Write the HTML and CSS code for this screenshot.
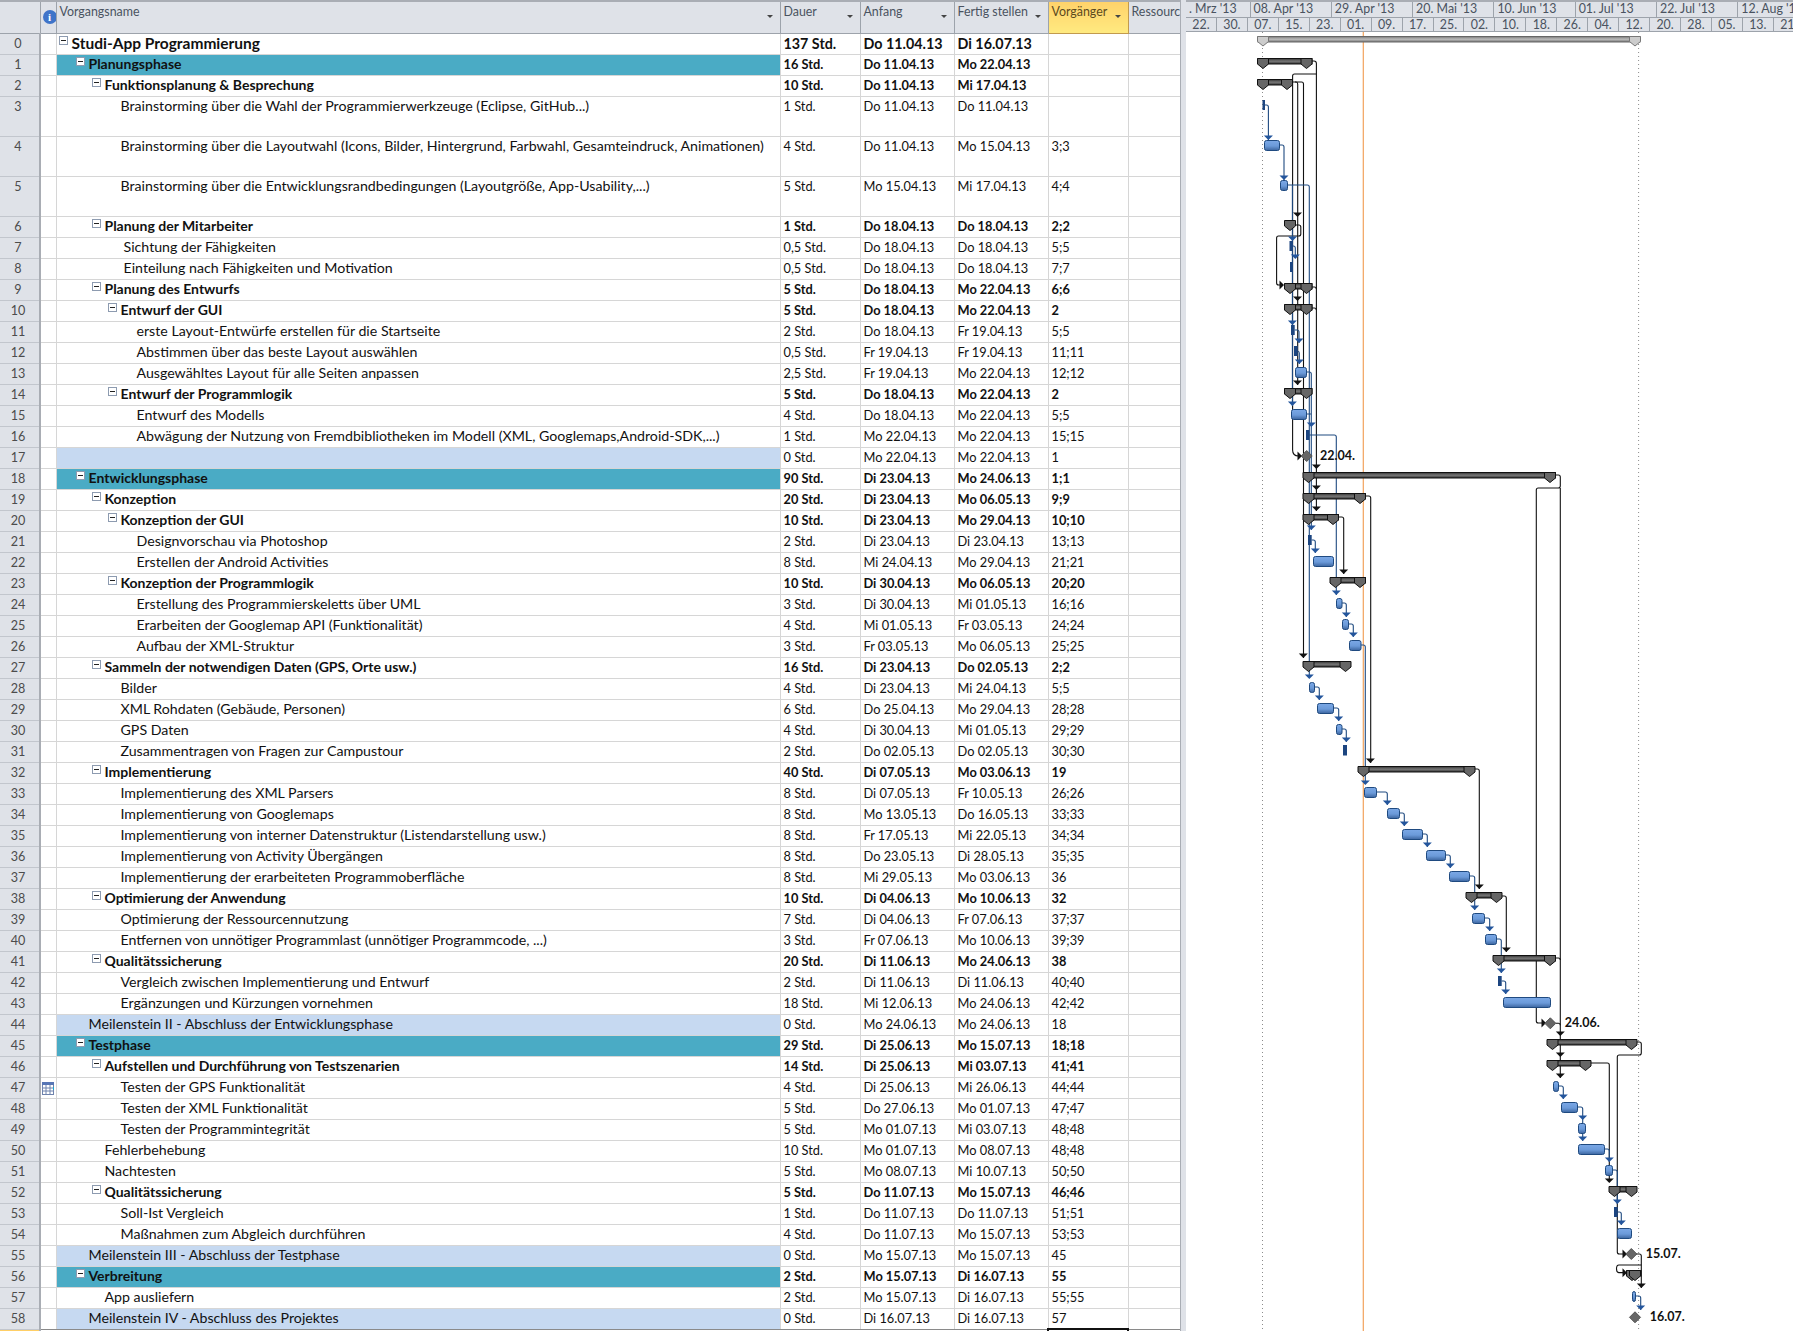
FILE: index.html
```html
<!DOCTYPE html>
<html lang="de">
<head>
  <meta charset="UTF-8">
  <title>Studi-App Programmierung</title>
  <link rel="stylesheet" href="styles.css">
</head>
<body>
<div class="sheet">
<table class="grid">
<colgroup><col class="c-id"><col class="c-info"><col class="c-name"><col class="c-dur"><col class="c-date"><col class="c-date"><col class="c-pred"><col class="c-res"></colgroup>
<thead><tr>
  <th></th>
  <th class="info-head"><span class="info-icon">i</span></th>
  <th>Vorgangsname<i class="drop"></i></th>
  <th>Dauer<i class="drop"></i></th>
  <th>Anfang<i class="drop"></i></th>
  <th>Fertig stellen<i class="drop"></i></th>
  <th class="active">Vorgänger<i class="drop"></i></th>
  <th class="clip">Ressourcenname</th>
</tr></thead>
<tbody>
<tr class="sum root"><td>0</td><td></td><td class="l0"><i class="tog"></i>Studi-App Programmierung</td><td>137 Std.</td><td>Do 11.04.13</td><td>Di 16.07.13</td><td></td><td></td></tr>
<tr class="sum phase"><td>1</td><td></td><td class="l1"><i class="tog"></i>Planungsphase</td><td>16 Std.</td><td>Do 11.04.13</td><td>Mo 22.04.13</td><td></td><td></td></tr>
<tr class="sum"><td>2</td><td></td><td class="l2"><i class="tog"></i>Funktionsplanung &amp; Besprechung</td><td>10 Std.</td><td>Do 11.04.13</td><td>Mi 17.04.13</td><td></td><td></td></tr>
<tr class="tall"><td>3</td><td></td><td class="l3">Brainstorming über die Wahl der Programmierwerkzeuge (Eclipse, GitHub...)</td><td>1 Std.</td><td>Do 11.04.13</td><td>Do 11.04.13</td><td></td><td></td></tr>
<tr class="tall"><td>4</td><td></td><td class="l3">Brainstorming über die Layoutwahl (Icons, Bilder, Hintergrund, Farbwahl, Gesamteindruck, Animationen)</td><td>4 Std.</td><td>Do 11.04.13</td><td>Mo 15.04.13</td><td>3;3</td><td></td></tr>
<tr class="tall"><td>5</td><td></td><td class="l3">Brainstorming über die Entwicklungsrandbedingungen (Layoutgröße, App-Usability,...)</td><td>5 Std.</td><td>Mo 15.04.13</td><td>Mi 17.04.13</td><td>4;4</td><td></td></tr>
<tr class="sum"><td>6</td><td></td><td class="l2"><i class="tog"></i>Planung der Mitarbeiter</td><td>1 Std.</td><td>Do 18.04.13</td><td>Do 18.04.13</td><td>2;2</td><td></td></tr>
<tr><td>7</td><td></td><td class="l3b">Sichtung der Fähigkeiten</td><td>0,5 Std.</td><td>Do 18.04.13</td><td>Do 18.04.13</td><td>5;5</td><td></td></tr>
<tr><td>8</td><td></td><td class="l3b">Einteilung nach Fähigkeiten und Motivation</td><td>0,5 Std.</td><td>Do 18.04.13</td><td>Do 18.04.13</td><td>7;7</td><td></td></tr>
<tr class="sum"><td>9</td><td></td><td class="l2"><i class="tog"></i>Planung des Entwurfs</td><td>5 Std.</td><td>Do 18.04.13</td><td>Mo 22.04.13</td><td>6;6</td><td></td></tr>
<tr class="sum"><td>10</td><td></td><td class="l3"><i class="tog"></i>Entwurf der GUI</td><td>5 Std.</td><td>Do 18.04.13</td><td>Mo 22.04.13</td><td>2</td><td></td></tr>
<tr><td>11</td><td></td><td class="l4">erste Layout-Entwürfe erstellen für die Startseite</td><td>2 Std.</td><td>Do 18.04.13</td><td>Fr 19.04.13</td><td>5;5</td><td></td></tr>
<tr><td>12</td><td></td><td class="l4">Abstimmen über das beste Layout auswählen</td><td>0,5 Std.</td><td>Fr 19.04.13</td><td>Fr 19.04.13</td><td>11;11</td><td></td></tr>
<tr><td>13</td><td></td><td class="l4">Ausgewähltes Layout für alle Seiten anpassen</td><td>2,5 Std.</td><td>Fr 19.04.13</td><td>Mo 22.04.13</td><td>12;12</td><td></td></tr>
<tr class="sum"><td>14</td><td></td><td class="l3"><i class="tog"></i>Entwurf der Programmlogik</td><td>5 Std.</td><td>Do 18.04.13</td><td>Mo 22.04.13</td><td>2</td><td></td></tr>
<tr><td>15</td><td></td><td class="l4">Entwurf des Modells</td><td>4 Std.</td><td>Do 18.04.13</td><td>Mo 22.04.13</td><td>5;5</td><td></td></tr>
<tr><td>16</td><td></td><td class="l4">Abwägung der Nutzung von Fremdbibliotheken im Modell (XML, Googlemaps,Android-SDK,...)</td><td>1 Std.</td><td>Mo 22.04.13</td><td>Mo 22.04.13</td><td>15;15</td><td></td></tr>
<tr class="mile"><td>17</td><td></td><td class="l1"></td><td>0 Std.</td><td>Mo 22.04.13</td><td>Mo 22.04.13</td><td>1</td><td></td></tr>
<tr class="sum phase"><td>18</td><td></td><td class="l1"><i class="tog"></i>Entwicklungsphase</td><td>90 Std.</td><td>Di 23.04.13</td><td>Mo 24.06.13</td><td>1;1</td><td></td></tr>
<tr class="sum"><td>19</td><td></td><td class="l2"><i class="tog"></i>Konzeption</td><td>20 Std.</td><td>Di 23.04.13</td><td>Mo 06.05.13</td><td>9;9</td><td></td></tr>
<tr class="sum"><td>20</td><td></td><td class="l3"><i class="tog"></i>Konzeption der GUI</td><td>10 Std.</td><td>Di 23.04.13</td><td>Mo 29.04.13</td><td>10;10</td><td></td></tr>
<tr><td>21</td><td></td><td class="l4">Designvorschau via Photoshop</td><td>2 Std.</td><td>Di 23.04.13</td><td>Di 23.04.13</td><td>13;13</td><td></td></tr>
<tr><td>22</td><td></td><td class="l4">Erstellen der Android Activities</td><td>8 Std.</td><td>Mi 24.04.13</td><td>Mo 29.04.13</td><td>21;21</td><td></td></tr>
<tr class="sum"><td>23</td><td></td><td class="l3"><i class="tog"></i>Konzeption der Programmlogik</td><td>10 Std.</td><td>Di 30.04.13</td><td>Mo 06.05.13</td><td>20;20</td><td></td></tr>
<tr><td>24</td><td></td><td class="l4">Erstellung des Programmierskeletts über UML</td><td>3 Std.</td><td>Di 30.04.13</td><td>Mi 01.05.13</td><td>16;16</td><td></td></tr>
<tr><td>25</td><td></td><td class="l4">Erarbeiten der Googlemap API (Funktionalität)</td><td>4 Std.</td><td>Mi 01.05.13</td><td>Fr 03.05.13</td><td>24;24</td><td></td></tr>
<tr><td>26</td><td></td><td class="l4">Aufbau der XML-Struktur</td><td>3 Std.</td><td>Fr 03.05.13</td><td>Mo 06.05.13</td><td>25;25</td><td></td></tr>
<tr class="sum"><td>27</td><td></td><td class="l2"><i class="tog"></i>Sammeln der notwendigen Daten (GPS, Orte usw.)</td><td>16 Std.</td><td>Di 23.04.13</td><td>Do 02.05.13</td><td>2;2</td><td></td></tr>
<tr><td>28</td><td></td><td class="l3">Bilder</td><td>4 Std.</td><td>Di 23.04.13</td><td>Mi 24.04.13</td><td>5;5</td><td></td></tr>
<tr><td>29</td><td></td><td class="l3">XML Rohdaten (Gebäude, Personen)</td><td>6 Std.</td><td>Do 25.04.13</td><td>Mo 29.04.13</td><td>28;28</td><td></td></tr>
<tr><td>30</td><td></td><td class="l3">GPS Daten</td><td>4 Std.</td><td>Di 30.04.13</td><td>Mi 01.05.13</td><td>29;29</td><td></td></tr>
<tr><td>31</td><td></td><td class="l3">Zusammentragen von Fragen zur Campustour</td><td>2 Std.</td><td>Do 02.05.13</td><td>Do 02.05.13</td><td>30;30</td><td></td></tr>
<tr class="sum"><td>32</td><td></td><td class="l2"><i class="tog"></i>Implementierung</td><td>40 Std.</td><td>Di 07.05.13</td><td>Mo 03.06.13</td><td>19</td><td></td></tr>
<tr><td>33</td><td></td><td class="l3">Implementierung des XML Parsers</td><td>8 Std.</td><td>Di 07.05.13</td><td>Fr 10.05.13</td><td>26;26</td><td></td></tr>
<tr><td>34</td><td></td><td class="l3">Implementierung von Googlemaps</td><td>8 Std.</td><td>Mo 13.05.13</td><td>Do 16.05.13</td><td>33;33</td><td></td></tr>
<tr><td>35</td><td></td><td class="l3">Implementierung von interner Datenstruktur (Listendarstellung usw.)</td><td>8 Std.</td><td>Fr 17.05.13</td><td>Mi 22.05.13</td><td>34;34</td><td></td></tr>
<tr><td>36</td><td></td><td class="l3">Implementierung von Activity Übergängen</td><td>8 Std.</td><td>Do 23.05.13</td><td>Di 28.05.13</td><td>35;35</td><td></td></tr>
<tr><td>37</td><td></td><td class="l3">Implementierung der erarbeiteten Programmoberfläche</td><td>8 Std.</td><td>Mi 29.05.13</td><td>Mo 03.06.13</td><td>36</td><td></td></tr>
<tr class="sum"><td>38</td><td></td><td class="l2"><i class="tog"></i>Optimierung der Anwendung</td><td>10 Std.</td><td>Di 04.06.13</td><td>Mo 10.06.13</td><td>32</td><td></td></tr>
<tr><td>39</td><td></td><td class="l3">Optimierung der Ressourcennutzung</td><td>7 Std.</td><td>Di 04.06.13</td><td>Fr 07.06.13</td><td>37;37</td><td></td></tr>
<tr><td>40</td><td></td><td class="l3">Entfernen von unnötiger Programmlast (unnötiger Programmcode, ...)</td><td>3 Std.</td><td>Fr 07.06.13</td><td>Mo 10.06.13</td><td>39;39</td><td></td></tr>
<tr class="sum"><td>41</td><td></td><td class="l2"><i class="tog"></i>Qualitätssicherung</td><td>20 Std.</td><td>Di 11.06.13</td><td>Mo 24.06.13</td><td>38</td><td></td></tr>
<tr><td>42</td><td></td><td class="l3">Vergleich zwischen Implementierung und Entwurf</td><td>2 Std.</td><td>Di 11.06.13</td><td>Di 11.06.13</td><td>40;40</td><td></td></tr>
<tr><td>43</td><td></td><td class="l3">Ergänzungen und Kürzungen vornehmen</td><td>18 Std.</td><td>Mi 12.06.13</td><td>Mo 24.06.13</td><td>42;42</td><td></td></tr>
<tr class="mile"><td>44</td><td></td><td class="l1">Meilenstein II - Abschluss der Entwicklungsphase</td><td>0 Std.</td><td>Mo 24.06.13</td><td>Mo 24.06.13</td><td>18</td><td></td></tr>
<tr class="sum phase"><td>45</td><td></td><td class="l1"><i class="tog"></i>Testphase</td><td>29 Std.</td><td>Di 25.06.13</td><td>Mo 15.07.13</td><td>18;18</td><td></td></tr>
<tr class="sum"><td>46</td><td></td><td class="l2"><i class="tog"></i>Aufstellen und Durchführung von Testszenarien</td><td>14 Std.</td><td>Di 25.06.13</td><td>Mi 03.07.13</td><td>41;41</td><td></td></tr>
<tr><td>47</td><td class="flag"><svg width="12" height="13" viewBox="0 0 12 13"><rect x=".5" y=".5" width="11" height="12" fill="#fff" stroke="#6f83ad"/><rect x="0" y="0" width="12" height="3" fill="#5876b5"/><path d="M4 3v9M8 3v9M1 6h10M1 9h10" stroke="#6f83ad"/><rect x="11" y="5" width="1" height="3" fill="#19a8cf"/></svg></td><td class="l3">Testen der GPS Funktionalität</td><td>4 Std.</td><td>Di 25.06.13</td><td>Mi 26.06.13</td><td>44;44</td><td></td></tr>
<tr><td>48</td><td></td><td class="l3">Testen der XML Funktionalität</td><td>5 Std.</td><td>Do 27.06.13</td><td>Mo 01.07.13</td><td>47;47</td><td></td></tr>
<tr><td>49</td><td></td><td class="l3">Testen der Programmintegrität</td><td>5 Std.</td><td>Mo 01.07.13</td><td>Mi 03.07.13</td><td>48;48</td><td></td></tr>
<tr><td>50</td><td></td><td class="l2">Fehlerbehebung</td><td>10 Std.</td><td>Mo 01.07.13</td><td>Mo 08.07.13</td><td>48;48</td><td></td></tr>
<tr><td>51</td><td></td><td class="l2">Nachtesten</td><td>5 Std.</td><td>Mo 08.07.13</td><td>Mi 10.07.13</td><td>50;50</td><td></td></tr>
<tr class="sum"><td>52</td><td></td><td class="l2"><i class="tog"></i>Qualitätssicherung</td><td>5 Std.</td><td>Do 11.07.13</td><td>Mo 15.07.13</td><td>46;46</td><td></td></tr>
<tr><td>53</td><td></td><td class="l3">Soll-Ist Vergleich</td><td>1 Std.</td><td>Do 11.07.13</td><td>Do 11.07.13</td><td>51;51</td><td></td></tr>
<tr><td>54</td><td></td><td class="l3">Maßnahmen zum Abgleich durchführen</td><td>4 Std.</td><td>Do 11.07.13</td><td>Mo 15.07.13</td><td>53;53</td><td></td></tr>
<tr class="mile"><td>55</td><td></td><td class="l1">Meilenstein III - Abschluss der Testphase</td><td>0 Std.</td><td>Mo 15.07.13</td><td>Mo 15.07.13</td><td>45</td><td></td></tr>
<tr class="sum phase"><td>56</td><td></td><td class="l1"><i class="tog"></i>Verbreitung</td><td>2 Std.</td><td>Mo 15.07.13</td><td>Di 16.07.13</td><td>55</td><td></td></tr>
<tr><td>57</td><td></td><td class="l2">App ausliefern</td><td>2 Std.</td><td>Mo 15.07.13</td><td>Di 16.07.13</td><td>55;55</td><td></td></tr>
<tr class="mile last"><td>58</td><td></td><td class="l1">Meilenstein IV - Abschluss des Projektes</td><td>0 Std.</td><td>Di 16.07.13</td><td>Di 16.07.13</td><td>57</td><td></td></tr>
<tr class="tail"><td></td><td></td><td></td><td></td><td></td><td></td><td class="picked"></td><td></td></tr>
</tbody>
</table>

<div class="splitter"></div>

<div class="chart">
  <div class="scale">
    <div class="tier tier-top">
      <span class="t1 first">. Mrz '13</span><span class="t1">08. Apr '13</span><span class="t1">29. Apr '13</span><span class="t1">20. Mai '13</span><span class="t1">10. Jun '13</span><span class="t1">01. Jul '13</span><span class="t1">22. Jul '13</span><span class="t1">12. Aug '13</span>
    </div>
    <div class="tier tier-low">
      <span class="t2">22.</span><span class="t2">30.</span><span class="t2">07.</span><span class="t2">15.</span><span class="t2">23.</span><span class="t2">01.</span><span class="t2">09.</span><span class="t2">17.</span><span class="t2">25.</span><span class="t2">02.</span><span class="t2">10.</span><span class="t2">18.</span><span class="t2">26.</span><span class="t2">04.</span><span class="t2">12.</span><span class="t2">20.</span><span class="t2">28.</span><span class="t2">05.</span><span class="t2">13.</span><span class="t2">21.</span>
    </div>
  </div>
  <!-- page coordinates, so the bars can be read straight off the row grid -->
  <svg class="bars" viewBox="1186 32 607 1299" width="607" height="1299">
    <defs>
      <linearGradient id="blue" x1="0" y1="0" x2="0" y2="1"><stop offset="0" stop-color="#7ba8e6"/><stop offset=".55" stop-color="#6b9ad9"/><stop offset="1" stop-color="#3c659f"/></linearGradient>
      <linearGradient id="dark" x1="0" y1="0" x2="0" y2="1"><stop offset="0" stop-color="#333"/><stop offset=".5" stop-color="#777"/><stop offset="1" stop-color="#333"/></linearGradient>
      <linearGradient id="grey" x1="0" y1="0" x2="0" y2="1"><stop offset="0" stop-color="#777"/><stop offset=".5" stop-color="#bbb"/><stop offset="1" stop-color="#777"/></linearGradient>
      <path id="cap" d="M-5.5 0H5.5V5.500L0 10L-5.5 5.500Z" fill="#666" stroke="#111"/>
      <path id="capl" d="M-5.5 0H5.500V5L0 9.500L-5.5 5Z" fill="#ccc" stroke="#777"/>
      <path id="ak" d="M-4.5 -4.5H4.5L0 0Z" fill="#111"/>
      <path id="ab" d="M-4.5 -4.5H4.5L0 0Z" fill="#23559c"/>
      <path id="ar" d="M-4.5 -4.5V4.5L0 0Z" fill="#111"/>
      <path id="dia" d="M0 -5.5L5.5 0L0 5.5L-5.5 0Z" fill="#666" stroke="#555"/>
    </defs>

    <g class="guides">
      <path class="dots" d="M1262.5 32V1331M1638.6 32V1331"/>
      <path class="today" d="M1363.3 32V1331"/>
    </g>

    <g class="links-k">
      <path d="M1312 61h2q2.400 0 2.400 2.400V511"/>
      <path d="M1316.400 74H1294.600q-2 0-2 2V450q0 6 6 6h3"/>
      <path d="M1292.600 82h8.900q2 0 2 2V658"/>
      <path d="M1295 82h1q1.700 0 1.700 2V385"/>
      <path d="M1296 225h2.800q2 0 2 2v7q0 2-2 2H1278.600q-2 0-2 2v45q0 2 2 2h3"/>
      <path d="M1312 287h2.300q2 0 2 2M1312 308h2.300q2 0 2 2"/>
      <path d="M1555.700 475h2.600q2 0 2 2V486q0 2-2 2H1538.300q-2 0-2 2V1021q0 2 2 2h4"/>
      <path d="M1560.300 488V1078"/>
      <path d="M1365.700 496h3q2 0 2 2V763"/>
      <path d="M1338.700 517h3q2 0 2 2V574"/>
      <path d="M1474.700 769h2.600q2 0 2 2V889"/>
      <path d="M1501.700 896h2.600q2 0 2 2V952"/>
      <path d="M1555.700 958h2.600q2 0 2 2M1555.500 1023.300h3q1.800 0 1.800 2"/>
      <path d="M1636.700 1042h2.600q2 0 2 2V1053q0 2-2 2H1619.300q-2 0-2 2V1252q0 2 2 2h4"/>
      <path d="M1590.700 1063h16.600q2 0 2 2V1182"/>
      <path d="M1636 1254h3.300q2 0 2 2V1288"/>
      <path d="M1641.300 1265H1619q-2.500 0-2.500 3.800t2.500 3.800h4"/>
    </g>

    <g class="links-b">
      <path d="M1265 105h1.400q2 0 2 2V140M1280 145h2q2 0 2 2V180"/>
      <path d="M1287.500 185h19.800q2 0 2 2V678M1292.400 185V406"/>
      <path d="M1293 246h.3q2 0 2 2V258M1294.700 330h2.300q2 0 2 2V343M1297.700 351h-.5q2 0 2.100 2V364"/>
      <path d="M1306.700 372h2.600q2 0 2 2V530M1306.700 414h4.600"/>
      <path d="M1309.300 435h25q2 0 2 2V595"/>
      <path d="M1311.700 540h1.600q2 0 2 2V553"/>
      <path d="M1342 603h2.300q2 0 2 2V617M1348.700 624h2.600q2 0 2 2V637"/>
      <path d="M1361 645h2.300q2 0 2 2V784"/>
      <path d="M1314.700 687h2.600q2 0 2 2V700M1333.700 708h3q2 0 2 2V721M1342 729h2.300q2 0 2 2V742"/>
      <path d="M1376.700 792h8.600q2 0 2 2V805M1400 813h2.300q2 0 2 2V826M1422.700 834h2.600q2 0 2 2V847M1445.700 855h2.600q2 0 2 2V868"/>
      <path d="M1469.700 876h3q2 0 2 2V910M1484.700 918h3q2 0 2 2V931M1496.700 939h2.600q2 0 2 2V973M1501.700 981h2q2 0 2 2V994"/>
      <path d="M1558.700 1086h2.600q2 0 2 2V1099M1577.700 1107h3q2 0 2 2V1141M1604.700 1149h2.600q2 0 2 2V1162"/>
      <path d="M1612.700 1170h2.600q2 0 2 2V1204M1617.700 1212h1.600q2 0 2 2V1225M1635.700 1296h3q2 0 2 2V1310"/>
    </g>

    <g class="arrows-k">
      <use href="#ak" x="1297.500" y="217"/><use href="#ak" x="1297.500" y="301"/><use href="#ak" x="1297.500" y="385"/>
      <use href="#ak" x="1316.400" y="469"/><use href="#ak" x="1316.400" y="490"/><use href="#ak" x="1316.400" y="511"/>
      <use href="#ak" x="1343.700" y="574"/><use href="#ak" x="1303.300" y="658"/><use href="#ak" x="1370.400" y="763"/>
      <use href="#ak" x="1479.300" y="889"/><use href="#ak" x="1506.300" y="952"/><use href="#ak" x="1560.300" y="1036"/>
      <use href="#ak" x="1560.300" y="1057"/><use href="#ak" x="1560.300" y="1078"/><use href="#ak" x="1609.300" y="1183"/>
      <use href="#ak" x="1641.300" y="1288"/>
      <use href="#ar" x="1284" y="285"/><use href="#ar" x="1302" y="456"/><use href="#ar" x="1546" y="1023"/>
      <use href="#ar" x="1627" y="1254"/><use href="#ar" x="1627" y="1272.700"/>
    </g>
    <g class="arrows-b">
      <use href="#ab" x="1268.400" y="140"/><use href="#ab" x="1284" y="180"/><use href="#ab" x="1292.500" y="241"/>
      <use href="#ab" x="1295.300" y="259"/><use href="#ab" x="1292.400" y="325"/><use href="#ab" x="1299" y="343"/>
      <use href="#ab" x="1299.300" y="364"/><use href="#ab" x="1292.400" y="406"/><use href="#ab" x="1311.300" y="427"/>
      <use href="#ab" x="1311.300" y="530"/><use href="#ab" x="1315.300" y="553"/><use href="#ab" x="1336.300" y="595"/>
      <use href="#ab" x="1346.300" y="617"/><use href="#ab" x="1353.300" y="637"/><use href="#ab" x="1309.300" y="679"/>
      <use href="#ab" x="1319.300" y="700"/><use href="#ab" x="1338.700" y="721"/><use href="#ab" x="1346.300" y="742"/>
      <use href="#ab" x="1365.300" y="785"/><use href="#ab" x="1387.300" y="805"/><use href="#ab" x="1404.300" y="826"/>
      <use href="#ab" x="1427.300" y="847"/><use href="#ab" x="1450.300" y="868"/><use href="#ab" x="1474.700" y="910"/>
      <use href="#ab" x="1489.700" y="931"/><use href="#ab" x="1501.300" y="973"/><use href="#ab" x="1505.700" y="994"/>
      <use href="#ab" x="1563.300" y="1099"/><use href="#ab" x="1582.700" y="1120"/><use href="#ab" x="1582.700" y="1141"/>
      <use href="#ab" x="1609.300" y="1162"/><use href="#ab" x="1617.300" y="1204"/><use href="#ab" x="1621.300" y="1225"/>
      <use href="#ab" x="1640.700" y="1310"/>
    </g>

    <g class="project">
      <rect x="1258" y="36.500" width="382" height="5.500"/>
      <use href="#capl" x="1263" y="36.500"/><use href="#capl" x="1635" y="36.500"/>
    </g>

    <g class="summary">
      <rect x="1258" y="58.500" width="54" height="5.500"/><use href="#cap" x="1263" y="58.500"/><use href="#cap" x="1306.500" y="58.500"/>
      <rect x="1258" y="79.500" width="34.500" height="5.500"/><use href="#cap" x="1263" y="79.500"/><use href="#cap" x="1287" y="79.500"/>
      <use href="#cap" x="1290" y="220.500"/>
      <rect x="1285" y="283.500" width="27" height="5.500"/><use href="#cap" x="1290" y="283.500"/><use href="#cap" x="1306.500" y="283.500"/>
      <rect x="1285" y="304.500" width="27" height="5.500"/><use href="#cap" x="1290" y="304.500"/><use href="#cap" x="1306.500" y="304.500"/>
      <rect x="1285" y="388.500" width="27" height="5.500"/><use href="#cap" x="1290" y="388.500"/><use href="#cap" x="1306.500" y="388.500"/>
      <rect x="1303.500" y="472.500" width="252" height="5.500"/><use href="#cap" x="1308.500" y="472.500"/><use href="#cap" x="1550" y="472.500"/>
      <rect x="1303.500" y="493.500" width="62" height="5.500"/><use href="#cap" x="1308.500" y="493.500"/><use href="#cap" x="1360" y="493.500"/>
      <rect x="1303.500" y="514.500" width="35" height="5.500"/><use href="#cap" x="1308.500" y="514.500"/><use href="#cap" x="1333" y="514.500"/>
      <rect x="1330.500" y="577.500" width="35" height="5.500"/><use href="#cap" x="1335.500" y="577.500"/><use href="#cap" x="1360" y="577.500"/>
      <rect x="1303.500" y="661.500" width="47" height="5.500"/><use href="#cap" x="1308.500" y="661.500"/><use href="#cap" x="1345.500" y="661.500"/>
      <rect x="1358.500" y="766.500" width="116" height="5.500"/><use href="#cap" x="1363.500" y="766.500"/><use href="#cap" x="1469.500" y="766.500"/>
      <rect x="1466.500" y="892.500" width="35" height="5.500"/><use href="#cap" x="1471.500" y="892.500"/><use href="#cap" x="1496.500" y="892.500"/>
      <rect x="1493.500" y="955.500" width="62" height="5.500"/><use href="#cap" x="1498.500" y="955.500"/><use href="#cap" x="1550" y="955.500"/>
      <rect x="1547.500" y="1039.500" width="89" height="5.500"/><use href="#cap" x="1552.500" y="1039.500"/><use href="#cap" x="1631.500" y="1039.500"/>
      <rect x="1547.500" y="1060.500" width="43" height="5.500"/><use href="#cap" x="1552.500" y="1060.500"/><use href="#cap" x="1585.500" y="1060.500"/>
      <rect x="1609.500" y="1186.500" width="27" height="5.500"/><use href="#cap" x="1614.500" y="1186.500"/><use href="#cap" x="1631.500" y="1186.500"/>
      <rect x="1627" y="1270.500" width="14" height="5.500"/><use href="#cap" x="1632" y="1270.500"/><use href="#cap" x="1635" y="1270.500"/>
    </g>

    <g class="tasks">
      <rect x="1264.500" y="140.500" width="15" height="10"/>
      <rect x="1280.500" y="180.500" width="7" height="10"/>
      <rect x="1295.500" y="367.500" width="11" height="10"/>
      <rect x="1291.500" y="409.500" width="15" height="10"/>
      <rect x="1313.500" y="556.500" width="20" height="10"/>
      <rect x="1336.500" y="598.500" width="5.500" height="10"/>
      <rect x="1342.500" y="619.500" width="6" height="10"/>
      <rect x="1349.500" y="640.500" width="11.500" height="10"/>
      <rect x="1309.500" y="682.500" width="5" height="10"/>
      <rect x="1317.500" y="703.500" width="16" height="10"/>
      <rect x="1336.500" y="724.500" width="5.500" height="10"/>
      <rect x="1364.500" y="787.500" width="12" height="10"/>
      <rect x="1387.500" y="808.500" width="12" height="10"/>
      <rect x="1402.500" y="829.500" width="20" height="10"/>
      <rect x="1426.500" y="850.500" width="19" height="10"/>
      <rect x="1449.500" y="871.500" width="20" height="10"/>
      <rect x="1472.500" y="913.500" width="12" height="10"/>
      <rect x="1485.500" y="934.500" width="11" height="10"/>
      <rect x="1503.500" y="997.500" width="47" height="10"/>
      <rect x="1553.500" y="1081.500" width="5" height="10"/>
      <rect x="1561.500" y="1102.500" width="16" height="10"/>
      <rect x="1578.500" y="1123.500" width="7" height="10"/>
      <rect x="1578.500" y="1144.500" width="26" height="10"/>
      <rect x="1605.500" y="1165.500" width="7" height="10"/>
      <rect x="1617.500" y="1228.500" width="14" height="10"/>
      <rect x="1632.500" y="1291.500" width="3" height="10"/>
    </g>
    <g class="ticks">
      <rect x="1262.500" y="100" width="2.500" height="10"/>
      <rect x="1289.500" y="241" width="3.500" height="10"/>
      <rect x="1290" y="262" width="2.700" height="10"/>
      <rect x="1291" y="325" width="3.700" height="10"/>
      <rect x="1294" y="346" width="3.700" height="10"/>
      <rect x="1306" y="430" width="3.300" height="10"/>
      <rect x="1308" y="535" width="3.700" height="10"/>
      <rect x="1343" y="745" width="4" height="10.500"/>
      <rect x="1498" y="976" width="3.700" height="10"/>
      <rect x="1614" y="1207" width="3.700" height="10"/>
    </g>

    <g class="marks">
      <use href="#dia" x="1306.700" y="456"/><use href="#dia" x="1550.300" y="1023.300"/>
      <use href="#dia" x="1631.300" y="1254"/><use href="#dia" x="1635" y="1317.300"/>
    </g>
    <g class="labels">
      <text x="1320" y="460">22.04.</text>
      <text x="1564.700" y="1027">24.06.</text>
      <text x="1645.700" y="1258">15.07.</text>
      <text x="1649.700" y="1321">16.07.</text>
    </g>
  </svg>
</div>
</div>
</body>
</html>
```

FILE: styles.css
```css
html, body {
  margin: 0;
  padding: 0;
  height: 100%;
  overflow: hidden;
  background: #fff;
}

.sheet {
  display: flex;
  height: 1331px;
  overflow: hidden;
  font-family: "Lato", "Liberation Sans", sans-serif;
  font-size: 12.8px;
  color: #111;
}

/* task table */
.grid {
  width: 1180px;
  flex: none;
  table-layout: fixed;
  border-collapse: collapse;
  align-self: flex-start;
}
.c-id { width: 40px; }
.c-info { width: 16px; }
.c-name { width: 724px; }
.c-dur { width: 80px; }
.c-date { width: 94px; }
.c-pred { width: 80px; }
.c-res { width: 52px; }

.grid th {
  position: relative;
  height: 32px;
  padding: 2px 3px 0;
  box-sizing: border-box;
  vertical-align: top;
  text-align: left;
  font-weight: normal;
  font-size: 12.4px;
  color: #4a5360;
  background: #dfe2e8;
  border-top: 2px solid #a9adb4;
  border-right: 1px solid #9da3ab;
  border-bottom: 1px solid #9da3ab;
  white-space: nowrap;
}
.grid th.active {
  background: linear-gradient(#ffd26a, #ffea80);
  border-right: 1px solid #c29a4e;
  border-left: 1px solid #c29a4e;
  border-bottom: 1px solid #c29a4e;
  color: #5b4a20;
}
.grid th.clip { overflow: hidden; border-right: none; }

.drop {
  position: absolute;
  right: 7px;
  top: 13px;
  border-left: 3.500px solid transparent;
  border-right: 3.500px solid transparent;
  border-top: 3.500px solid #444;
}

.info-head { padding: 0 !important; overflow: hidden; }
.info-icon {
  display: block;
  width: 14px;
  height: 14px;
  margin-top: 8px;
  margin-left: 2px;
  border-radius: 50%;
  background: #3f74c9;
  color: #fff;
  font: bold 11px/14px "Liberation Serif", serif;
  text-align: center;
}

.grid td {
  height: 21px;
  padding: 0 3px;
  box-sizing: border-box;
  vertical-align: top;
  line-height: 19px;
  border-right: 1px solid #d6d6d6;
  border-bottom: 1px solid #d6d6d6;
  white-space: nowrap;
  overflow: hidden;
}
.grid td:first-child {
  text-align: center;
  padding: 0 3px 0 0;
  background: #dfe2e8;
  border-right: 2px solid #a9adb4;
  border-bottom: 1px solid #c2c6cd;
  color: #4c4c4c;
  font-size: 12.6px;
}
.grid td:last-child { border-right: none; }
.grid td:nth-child(3) { font-size: 14.2px; line-height: 18px; }
.tall td { height: 40px; }

.sum td { font-weight: bold; }
.sum td:first-child { font-weight: normal; }
.sum td:nth-child(3) { font-size: 14px; }
.root td { font-size: 14.300px; }
.root td:nth-child(3) { font-size: 15.500px; }
.root td:first-child { font-size: 12.6px; }
.phase td:nth-child(3) { background: #4aabc5; }
.mile td:nth-child(3) { background: #c6d9f1; }
.last td { border-bottom: 1px solid #8a8a8a; }

.grid td.l0 { padding-left: 15px; }
.grid td.l1 { padding-left: 32px; }
.grid td.l2 { padding-left: 48px; }
.grid td.l3 { padding-left: 64px; }
.grid td.l3b { padding-left: 67px; }
.grid td.l4 { padding-left: 80px; }

/* bottom edge of the next row, with the selected cell */
.tail td {
  height: 3px;
  padding: 0;
  line-height: 0;
  border: none;
}
.grid .tail td:first-child { background: #ffcf66; border-right: 2px solid #a9adb4; border-bottom: none; }
.grid .tail td.picked {
  border-top: 2px solid #111;
  border-left: 2px solid #111;
  border-right: 2px solid #111;
}

.tog {
  position: absolute;
  width: 9px;
  height: 9px;
  margin: 2px 0 0 -13px;
  box-sizing: border-box;
  border: 1px solid #8d9bb0;
  background: #fff;
}
.tog::after {
  content: "";
  position: absolute;
  left: 1px;
  right: 1px;
  top: 3px;
  height: 1px;
  background: #222;
}
.flag { padding: 0 !important; text-align: center; vertical-align: middle !important; }
.flag svg { display: block; margin: 1px auto 0; }

.splitter {
  width: 6px;
  flex: none;
  background: #dfe2e8;
  border-left: 1px solid #a9adb4;
  box-sizing: border-box;
}

/* gantt */
.chart {
  flex: 1;
  min-width: 0;
  overflow: hidden;
}
.scale {
  height: 32px;
  box-sizing: border-box;
  border-top: 2px solid #a9adb4;
  border-bottom: 1px solid #9da3ab;
  background: #dfe2e8;
  color: #4a5360;
  font-size: 12.4px;
}
.tier {
  display: flex;
  white-space: nowrap;
  overflow: hidden;
}
.tier-top { height: 15px; border-bottom: 1px solid #9da3ab; line-height: 14px; }
.tier-low { height: 14px; line-height: 14px; }
.t1 {
  flex: none;
  width: 81.3px;
  padding-left: 3px;
  box-sizing: border-box;
  border-right: 1px solid #9da3ab;
}
.t1.first { width: 64.5px; }
.t2 {
  flex: none;
  width: 30.95px;
  box-sizing: border-box;
  text-align: center;
  border-right: 1px solid #9da3ab;
}

.bars { display: block; }
.dots { fill: none; stroke: #8c8c8c; stroke-dasharray: 1 3; }
.today { fill: none; stroke: #f2a25c; stroke-width: 1.2; }
.links-k path { fill: none; stroke: #111; stroke-width: 1.1; }
.links-b path { fill: none; stroke: #1f4a80; stroke-width: 1.1; }
.project rect { fill: url(#grey); stroke: #666; }
.summary rect { fill: url(#dark); stroke: #111; }
.tasks rect { fill: url(#blue); stroke: #1f4a80; rx: 2px; }
.ticks rect { fill: #1c4580; }
.labels text {
  font-family: "Lato", "Liberation Sans", sans-serif;
  font-size: 12.5px;
  font-weight: bold;
  fill: #111;
}
```
